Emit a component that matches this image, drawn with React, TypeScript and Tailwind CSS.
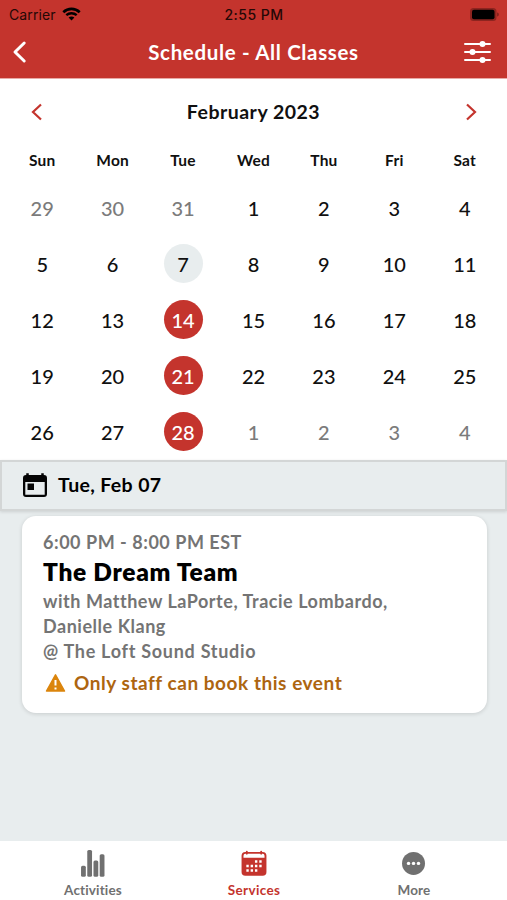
import clsx from 'clsx'

const WEEKDAYS = ['Sun', 'Mon', 'Tue', 'Wed', 'Thu', 'Fri', 'Sat']

const WEEKS = [
  [29, 30, 31, 1, 2, 3, 4],
  [5, 6, 7, 8, 9, 10, 11],
  [12, 13, 14, 15, 16, 17, 18],
  [19, 20, 21, 22, 23, 24, 25],
  [26, 27, 28, 1, 2, 3, 4],
]

function StatusBar() {
  return (
    <div className="grid h-7 grid-cols-3 items-center pl-[9px] pr-2 font-['Inter',sans-serif] text-[14px] text-[#240806]">
      <div className="flex items-center gap-[6px]">
        <span className="tracking-[0.1px]">Carrier</span>
        <svg className="h-[14px] w-[19px]" fill="none" viewBox="0 0 19 14">
          <path d="M1.3 5.2C6 .8 13 .8 17.7 5.2" stroke="#000" strokeWidth="2.7" />
          <path d="M4.3 8.2c3-2.7 7.4-2.7 10.4 0" stroke="#000" strokeWidth="2.4" />
          <path d="M6.6 10.5c1.7-1.5 4.1-1.5 5.8 0L9.5 13.5z" fill="#000" />
        </svg>
      </div>
      <span className="text-center font-medium tracking-[0.5px] whitespace-nowrap">2:55 PM</span>
      <svg className="ml-auto h-[13px] w-[29px]" viewBox="0 0 29 13">
        <rect fill="#8d241f" height="13" rx="3.5" width="26.5" />
        <rect fill="#000" height="9.5" rx="2" width="22.5" x="2" y="1.75" />
        <path d="M27.3 4.5c1.8.6 1.8 3.4 0 4z" fill="#6d1b17" />
      </svg>
    </div>
  )
}

function Header() {
  return (
    <header className="h-[79px] border-b border-[#e8aaa6] bg-[#c4342d] text-white">
      <StatusBar />
      <div className="flex h-12 items-center justify-between pl-[12px] pr-4">
        <svg className="h-6 w-[27px]" fill="none" viewBox="0 0 27 24">
          <path d="M12.2 3 3 12l9.2 9" stroke="currentColor" strokeLinecap="round" strokeLinejoin="round" strokeWidth="3" />
        </svg>
        <h1 className="pl-1 text-[20.5px] font-bold tracking-[0.65px]">Schedule - All Classes</h1>
        <svg className="h-6 w-[27px]" viewBox="0 0 27 24">
          <path d="M1 4h25M1 12h25M1 20h25" stroke="currentColor" strokeLinecap="round" strokeWidth="2" />
          <g fill="currentColor">
            <circle cx="18.5" cy="4" r="3" />
            <circle cx="8.5" cy="12" r="3" />
            <circle cx="18.5" cy="20" r="3" />
          </g>
        </svg>
      </div>
    </header>
  )
}

function Day({ day, week }: { day: number; week: number }) {
  const outside = (week === 0 && day > 20) || (week === 4 && day < 10)
  const booked = !outside && [14, 21, 28].includes(day)
  const today = !outside && day === 7

  return (
    <div className="flex h-14 items-center justify-center">
      <span
        className={clsx(
          'flex size-[39px] items-center justify-center rounded-full pt-[2px] text-[20px] font-medium',
          booked && 'bg-[#c4342d] text-white',
          today && 'bg-[#e8edee]',
          outside && 'text-[#7b7b7b]',
        )}
      >
        {day}
      </span>
    </div>
  )
}

function Calendar() {
  return (
    <section className="h-[381px] bg-white">
      <div className="flex h-[66px] items-center justify-between px-[30px]">
        <svg className="h-5 w-3" fill="none" viewBox="0 0 12 20">
          <path d="M11 2.5 3 10l8 7.5" stroke="#c4342d" strokeWidth="2.2" />
        </svg>
        <h2 className="text-[19.5px] font-bold tracking-[0.5px]">February 2023</h2>
        <svg className="h-5 w-3" fill="none" viewBox="0 0 12 20">
          <path d="M2 2.5 10 10l-8 7.5" stroke="#c4342d" strokeWidth="2.2" />
        </svg>
      </div>
      <div className="grid grid-cols-7 px-[7px]">
        {WEEKDAYS.map((name) => (
          <div
            className="flex h-[30px] items-center justify-center pt-px text-[15.5px] font-bold tracking-[0.2px]"
            key={name}
          >
            {name}
          </div>
        ))}
      </div>
      <div className="mt-1 grid grid-cols-7 px-[7px]">
        {WEEKS.map((days, week) => days.map((day) => <Day day={day} key={`${week}-${day}`} week={week} />))}
      </div>
    </section>
  )
}

function EventCard() {
  return (
    <article className="mx-5 ml-[22px] mt-[5px] h-[197px] rounded-[14px] bg-white px-[21px] pt-[14px] text-[18px] font-bold tracking-[0.53px] text-[#747474] shadow-[0_1px_4px_rgba(0,0,0,0.14)]">
      <p className="leading-[25px]">6:00 PM - 8:00 PM EST</p>
      <h3 className="text-[24.5px] leading-[34px] font-extrabold tracking-[0.7px] text-black">The Dream Team</h3>
      <p className="leading-[25px]">
        with Matthew LaPorte, Tracie Lombardo,
        <br />
        Danielle Klang
      </p>
      <p className="leading-[25px] tracking-[0.72px]">@ The Loft Sound Studio</p>
      <div className="mt-[6px] flex items-center text-[19px] leading-[25px] tracking-[0.54px] text-[#ad6510]">
        <svg className="mr-[8px] ml-[2px] h-5 w-[21px]" viewBox="0 0 21 20">
          <path d="M10.5 1.8 19.5 18h-18z" fill="#db850d" stroke="#db850d" strokeLinejoin="round" strokeWidth="1.5" />
          <path d="M10.5 7v5.5M10.5 14.4v2" stroke="#fff" strokeWidth="2" />
        </svg>
        Only staff can book this event
      </div>
    </article>
  )
}

function TabBar() {
  return (
    <nav className="flex h-[59px] justify-between bg-white px-[13px] pt-[9px] text-[13.5px] font-bold tracking-[0.15px] text-[#707070]">
      <div className="flex w-40 flex-col items-center gap-[2px]">
        <svg className="h-[29px] w-[26px]" fill="currentColor" viewBox="0 0 26 29">
          <rect height="11.5" rx="1.6" width="5" x=".5" y="16.5" />
          <rect height="28" rx="1.6" width="5" x="7" y="0" />
          <rect height="17" rx="1.6" width="5" x="13.5" y="11" />
          <rect height="23.5" rx="1.6" width="5" x="20" y="4.5" />
        </svg>
        <span>Activities</span>
      </div>
      <div className="flex w-40 flex-col items-center gap-[2px] text-[#c4342d]">
        <svg className="h-[29px] w-[26px]" viewBox="0 0 26 29">
          <rect fill="currentColor" height="25" rx="4" width="26" y="2" />
          <path d="M5.5 1.9v3M20.5 1.9v3" stroke="currentColor" strokeLinecap="round" strokeWidth="2" />
          <path d="M2 8V6q0-2 2-2h.5q1 2 2 0h13q1 2 2 0h.5q2 0 2 2v2z" fill="#fff" />
          <path
            d="M14 12h2.5M18.5 12H21M5 16.7h2.5M9.5 16.7H12M14 16.7h2.5M18.5 16.7H21M5 21.3h2.5M9.5 21.3H12M14 21.3h2.5"
            stroke="#fff"
            strokeWidth="2.6"
          />
        </svg>
        <span className="pl-px tracking-[0.35px]">Services</span>
      </div>
      <div className="flex w-40 flex-col items-center gap-[2px]">
        <svg className="h-[29px] w-[26px]" viewBox="0 0 26 29">
          <circle cx="12.5" cy="14" fill="currentColor" r="12" />
          <g fill="#fff">
            <circle cx="7.3" cy="14" r="1.8" />
            <circle cx="12.5" cy="14" r="1.8" />
            <circle cx="17.7" cy="14" r="1.8" />
          </g>
        </svg>
        <span>More</span>
      </div>
    </nav>
  )
}

export default function App() {
  return (
    <div className="flex h-[900px] w-[507px] flex-col overflow-hidden bg-[#e8edee] font-['Lato','Open_Sans',sans-serif] text-[#101010]">
      <Header />
      <Calendar />
      <main className="flex-1">
        <div className="flex h-[51px] items-center border-2 border-[#d3d6d6] pb-px pl-[21px] shadow-[0_1px_3px_rgba(0,0,0,0.12)]">
          <svg className="h-[25px] w-6" viewBox="0 0 24 25">
            <path d="M3 2h18q3 0 3 3v16q0 3-3 3H3q-3 0-3-3V5q0-3 3-3m-.7 7v12.7h19.4V9z" fill="#050505" fillRule="evenodd" />
            <path d="M4.5.3v4M19.5.3v4" stroke="#050505" strokeWidth="2.5" />
            <path d="M4.5 10.5H11V17H4.5z" fill="#050505" />
          </svg>
          <span className="ml-[11px] pb-px text-[19.5px] font-bold tracking-[0.35px] text-black">Tue, Feb 07</span>
        </div>
        <EventCard />
      </main>
      <TabBar />
    </div>
  )
}
